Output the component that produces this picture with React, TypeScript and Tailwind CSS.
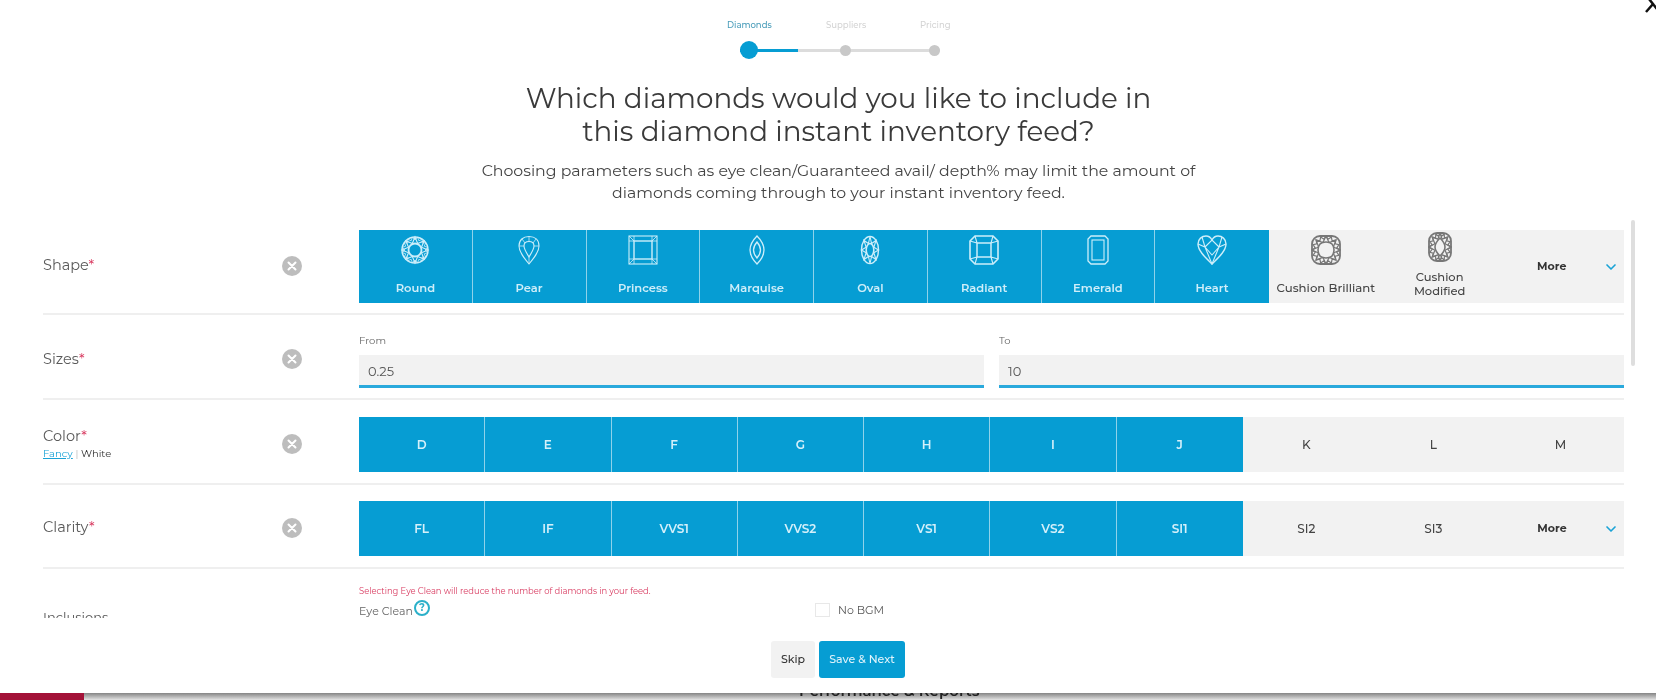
import React from "react";
import { ChevronDown } from "lucide-react";

type GemProps = { kind: string; color: string };

// zigzag ring of facets between two radii
const ring = (cx: number, cy: number, rx1: number, ry1: number, rx2: number, ry2: number, n: number) => {
  const pts: string[] = [];
  for (let i = 0; i < n * 2; i++) {
    const a = (Math.PI * i) / n - Math.PI / 2;
    const rx = i % 2 === 0 ? rx1 : rx2;
    const ry = i % 2 === 0 ? ry1 : ry2;
    pts.push(`${(cx + rx * Math.cos(a)).toFixed(2)} ${(cy + ry * Math.sin(a)).toFixed(2)}`);
  }
  return `M${pts.join("L")}Z`;
};

// rough facet drawings of the diamond cuts
const Gem = ({ kind, color }: GemProps) => {
  const common = { fill: "none", stroke: color, strokeWidth: 1.1 };
  let body: React.ReactNode = null;
  let w = 30;
  const h = 30;
  if (kind === "round") {
    body = (
      <g {...common}>
        <circle cx="15" cy="15" r="13" strokeWidth="1.5" />
        <circle cx="15" cy="15" r="6.5" strokeWidth="1.8" />
        <path d={ring(15, 15, 13, 13, 7, 7, 8)} />
        <path d={ring(15, 15, 10, 10, 13, 13, 16)} strokeWidth="0.8" />
      </g>
    );
  } else if (kind === "pear") {
    w = 24;
    body = (
      <g {...common}>
        <path d="M12 29C7 23 2 17 2 11 2 5 6 1.500 12 1.500S22 5 22 11C22 17 17 23 12 29Z" />
        <path d="M12 22C9 17 7 14 7 11 7 8 9 6.500 12 6.500S17 8 17 11C17 14 15 17 12 22Z" />
        <path d="M2 11H7M22 11H17M12 1.500V6.500M12 22V29M5 4 8 8M19 4 16 8" strokeWidth="0.8" />
      </g>
    );
  } else if (kind === "princess") {
    body = (
      <g {...common}>
        <rect x="1" y="1" width="28" height="28" />
        <rect x="6" y="6" width="18" height="18" strokeWidth="1.4" />
        <path d="M1 1 6 6M29 1 24 6M1 29 6 24M29 29 24 24M1 6H6V1M24 1V6H29M1 24H6V29M24 29V24H29" strokeWidth="0.8" />
      </g>
    );
  } else if (kind === "marquise") {
    w = 18;
    body = (
      <g {...common} strokeWidth="1.300">
        <path d="M9 1C14 6 16 11 16 15S14 24 9 29C4 24 2 19 2 15S4 6 9 1Z" />
        <path d="M9 7C11.500 10 12.500 13 12.500 15S11.500 20 9 23C6.500 20 5.500 17 5.500 15S6.500 10 9 7Z" />
      </g>
    );
  } else if (kind === "oval") {
    w = 20;
    body = (
      <g {...common}>
        <ellipse cx="10" cy="15" rx="8.500" ry="13.500" strokeWidth="1.400" />
        <ellipse cx="10" cy="15" rx="3.800" ry="6.500" strokeWidth="1.600" />
        <path d={ring(10, 15, 8.5, 13.5, 4.2, 7, 8)} />
      </g>
    );
  } else if (kind === "radiant") {
    body = (
      <g {...common}>
        <path d="M6 1H24L29 6V24L24 29H6L1 24V6Z" strokeWidth="1.600" />
        <rect x="8" y="8" width="14" height="14" strokeWidth="1.500" />
        <path d="M6 1 8 8M24 1 22 8M1 6 8 8M29 6 22 8M1 24 8 22M29 24 22 22M6 29 8 22M24 29 22 22" />
      </g>
    );
  } else if (kind === "emerald") {
    w = 22;
    body = (
      <g {...common}>
        <path d="M4 1H18L21 4V26L18 29H4L1 26V4Z" strokeWidth="1.300" />
        <rect x="5" y="5" width="12" height="20" />
      </g>
    );
  } else if (kind === "heart") {
    body = (
      <g {...common}>
        <path d="M15 29C9 23 1 16 1 9 1 4 5 1 9 1 12 1 14 3 15 5 16 3 18 1 21 1 25 1 29 4 29 9 29 16 21 23 15 29Z" strokeWidth="1.400" />
        <path d="M1 9 8 12 15 5 22 12 29 9M8 12 15 29 22 12M8 12 15 20 22 12M5 2 8 12M25 2 22 12" />
      </g>
    );
  } else if (kind === "cushion") {
    body = (
      <g {...common} strokeWidth="1.200">
        <rect x="1" y="1" width="28" height="28" rx="8" strokeWidth="1.800" />
        <path d="M15 7C20 7 23 10 23 15S20 23 15 23 7 20 7 15 10 7 15 7Z" strokeWidth="1.600" />
        <path d={ring(15, 15, 14, 14, 8, 8, 8)} />
        <path d={ring(15, 15, 14, 14, 11, 11, 16)} />
      </g>
    );
  } else {
    w = 24;
    body = (
      <g {...common} strokeWidth="1.200">
        <rect x="1" y="1" width="22" height="28" rx="8" strokeWidth="1.800" />
        <path d="M12 6C16 10 17 13 17 15S16 20 12 24C8 20 7 17 7 15S8 10 12 6Z" strokeWidth="1.600" />
        <path d={ring(12, 15, 11, 14, 5.5, 8.5, 8)} />
        <path d={ring(12, 15, 11, 14, 8, 11, 16)} />
      </g>
    );
  }
  return (
    <svg width={w} height={h} viewBox={`0 0 ${w} ${h}`}>
      {body}
    </svg>
  );
};

const Star = () => <span className="text-[#d8395f]">*</span>;

const ClearIcon = () => (
  <span className="flex h-[20px] w-[20px] items-center justify-center rounded-full bg-[#bdbdbd]">
    <svg width="10" height="10" viewBox="0 0 10 10">
      <path d="M1.500 1.500 8.500 8.500M8.500 1.500 1.500 8.500" stroke="#fff" strokeWidth="2" strokeLinecap="round" />
    </svg>
  </span>
);

const Label = ({ children }: { children: React.ReactNode }) => (
  <div className="flex w-[316px] shrink-0 items-center pb-[2px]">
    <div className="w-[239px] pb-[1px] text-[14.500px] leading-[18px] text-[#5a5a5a]">{children}</div>
    <ClearIcon />
  </div>
);

const shapesOn = [
  ["Round", "round"],
  ["Pear", "pear"],
  ["Princess", "princess"],
  ["Marquise", "marquise"],
  ["Oval", "oval"],
  ["Radiant", "radiant"],
  ["Emerald", "emerald"],
  ["Heart", "heart"],
];

const More = () => (
  <div className="relative flex flex-1 items-center justify-center bg-[#f2f2f2] text-[11px] font-bold text-[#333]">
    <span className="mr-[17px]">More</span>
    <ChevronDown className="absolute right-[5px] top-1/2 -translate-y-1/2 text-[#1aa3d6]" size={16} strokeWidth={2.5} />
  </div>
);

const GradeBar = ({ on, off, more }: { on: string[]; off: string[]; more?: boolean }) => (
  <div className="flex h-[55px] flex-1 text-[12px]">
    {on.map((g, i) => (
      <div
        key={g}
        className={`flex w-[126.250px] items-center justify-center bg-[#069dd3] font-semibold text-[#d5f0fa] ${i < on.length - 1 ? "border-r border-[#8fd2ea]" : ""}`}
      >
        {g}
      </div>
    ))}
    {off.map((g) => (
      <div key={g} className="flex flex-1 items-center justify-center bg-[#f2f2f2] font-medium text-[#444]">
        {g}
      </div>
    ))}
    {more && <More />}
  </div>
);

const SizeInput = ({ label, value, className }: { label: string; value: string; className: string }) => (
  <div className={className}>
    <div className="mb-[6px] h-[17px] text-[10px] leading-[17px] text-[#666]">{label}</div>
    <div className="flex h-[33px] items-center border-b-[3px] border-[#2aa9dc] bg-[#f2f2f2] pl-[9px] pt-[3px] text-[13px] text-[#555]">
      {value}
    </div>
  </div>
);

export default function App() {
  return (
    <div className="relative h-[700px] w-[1656px] overflow-hidden bg-white font-['Montserrat','Inter',sans-serif] blur-[0.7px]">
      <div className="flex h-[693px] flex-col bg-white">
        {/* Stepper */}
        <div className="ml-[24px] flex h-[62px] flex-col items-center pt-[19px]">
          <div className="flex h-[13px] w-[240px] text-[8.500px] font-medium leading-[13px] text-[#d4d4d4]">
            <span className="ml-[7px] w-[99px] text-[#4a9dba]">Diamonds</span>
            <span className="w-[94px]">Suppliers</span>
            <span>Pricing</span>
          </div>
          <div className="relative mt-[9px] flex h-[18px] w-[200px] items-center">
            <div className="h-[3px] w-[58px] bg-[#069dd3]" />
            <div className="h-[3px] flex-1 bg-[#dcdcdc]" />
            <span className="absolute left-0 h-[18px] w-[18px] rounded-full bg-[#069dd3]" />
            <span className="absolute left-[100px] h-[11px] w-[11px] rounded-full bg-[#c8c8c8]" />
            <span className="absolute right-0 h-[11px] w-[11px] rounded-full bg-[#c8c8c8]" />
          </div>
        </div>

        {/* Heading */}
        <div className="ml-[21px] h-[158px] pt-[20px] text-center">
          <h1 className="text-[27.800px] font-normal leading-[33px] text-[#3a3a3a]">
            Which diamonds would you like to include in
            <br />
            this diamond instant inventory feed?
          </h1>
          <p className="mt-[12px] text-[15.750px] leading-[22px] text-[#444]">
            Choosing parameters such as eye clean/Guaranteed avail/ depth% may limit the amount of
            <br />
            diamonds coming through to your instant inventory feed.
          </p>
        </div>

        {/* Filter rows */}
        <div className="relative h-[398px] overflow-hidden pl-[43px] pr-[32px]">
          <div className="flex border-b-2 border-[#efefef] pb-[10px] pt-[10px]">
            <Label>
              Shape
              <Star />
            </Label>
            <div className="flex h-[73px] flex-1">
              {shapesOn.map(([name, kind], i) => (
                <div
                  key={name}
                  className={`flex w-[113.750px] flex-col items-center bg-[#069dd3] pt-[5px] text-[11.500px] font-semibold text-[#cfeef9] ${i < 7 ? "border-r border-[#8fd2ea]" : ""}`}
                >
                  <div className="flex h-[30px] items-center">
                    <Gem kind={kind} color="#cdeefa" />
                  </div>
                  <span className="mt-[16px] leading-[14px]">{name}</span>
                </div>
              ))}
              <div className="flex w-[113.750px] flex-col items-center bg-[#f2f2f2] pt-[5px] text-[11.750px] font-medium text-[#444]">
                <Gem kind="cushion" color="#777" />
                <span className="mt-[16px] whitespace-nowrap leading-[14px]">Cushion Brilliant</span>
              </div>
              <div className="flex w-[113.750px] flex-col items-center bg-[#f2f2f2] pt-[2px] text-center text-[11.500px] font-medium leading-[14px] text-[#444]">
                <Gem kind="cushion-mod" color="#777" />
                <span className="mt-[8px]">
                  Cushion
                  <br />
                  Modified
                </span>
              </div>
              <More />
            </div>
          </div>

          <div className="flex border-b-2 border-[#efefef] pb-[10px] pt-[17px]">
            <Label>
              Sizes
              <Star />
            </Label>
            <div className="flex flex-1 gap-[15px]">
              <SizeInput label="From" value="0.25" className="w-[625px]" />
              <SizeInput label="To" value="10" className="flex-1" />
            </div>
          </div>

          <div className="flex border-b-2 border-[#efefef] pb-[11px] pt-[17px]">
            <Label>
              Color
              <Star />
              <div className="mt-[3px] text-[10px] leading-[12px]">
                <span className="text-[#1aa3d6] underline">Fancy</span>
                <span className="text-[#bbb]"> | </span>
                <span className="text-[#333]">White</span>
              </div>
            </Label>
            <GradeBar on={["D", "E", "F", "G", "H", "I", "J"]} off={["K", "L", "M"]} />
          </div>

          <div className="flex border-b-2 border-[#efefef] pb-[11px] pt-[16px]">
            <Label>
              Clarity
              <Star />
            </Label>
            <GradeBar on={["FL", "IF", "VVS1", "VVS2", "VS1", "VS2", "SI1"]} off={["SI2", "SI3"]} more />
          </div>

          <div className="flex pt-[16px]">
            <div className="w-[316px] shrink-0 pt-[23px] text-[13px] text-[#555]">Inclusions</div>
            <div className="w-[456px]">
              <div className="text-[8.400px] leading-[12px] text-[#d8395f]">
                Selecting Eye Clean will reduce the number of diamonds in your feed.
              </div>
              <div className="mt-[3px] flex items-start text-[11px] leading-[16px] text-[#666]">
                <span className="mt-[3px]">Eye Clean</span>
                <span className="ml-[1px] flex h-[16px] w-[16px] items-center justify-center rounded-full border-2 border-[#2bb0c9] text-[10px] font-bold leading-none text-[#2bb0c9]">
                  ?
                </span>
              </div>
            </div>
            <div className="mt-[17px] flex h-[16px] items-center text-[11px] text-[#555]">
              <span className="h-[14px] w-[15px] border border-[#e8e8e8]" />
              <span className="ml-[8px]">No BGM</span>
            </div>
          </div>

          {/* scrollbar thumb */}
          <span className="absolute right-[21px] top-0 h-[146px] w-[4px] rounded-sm bg-[#dedede]" />
        </div>

        {/* Footer buttons */}
        <div className="flex justify-center gap-[4px] pt-[23px] text-[11px] font-medium">
          <button className="ml-[20px] h-[37px] w-[44px] rounded-[3px] bg-[#f2f2f2] text-[#333]">Skip</button>
          <button className="h-[37px] w-[86px] rounded-[3px] bg-[#069dd3] text-[#dff3fb]">Save &amp; Next</button>
        </div>
      </div>

      {/* page behind the modal */}
      <div className="flex h-[7px] bg-gradient-to-b from-[#858585] to-[#e4e4e4]">
        <div className="h-full w-[84px] bg-[#a31238]" />
        <div className="relative h-full flex-1 overflow-hidden">
          <span className="absolute left-[715px] top-[-13px] whitespace-nowrap text-[15px] font-semibold text-[#222]">
            Performance &amp; Reports
          </span>
        </div>
      </div>

      {/* close icon, cut off by the window */}
      <svg className="absolute right-0 top-0" width="12" height="14" viewBox="0 0 12 14">
        <path d="M2 12 9 4 5 -1M9 4 13 9" fill="none" stroke="#111" strokeWidth="2.500" />
      </svg>
    </div>
  );
}
